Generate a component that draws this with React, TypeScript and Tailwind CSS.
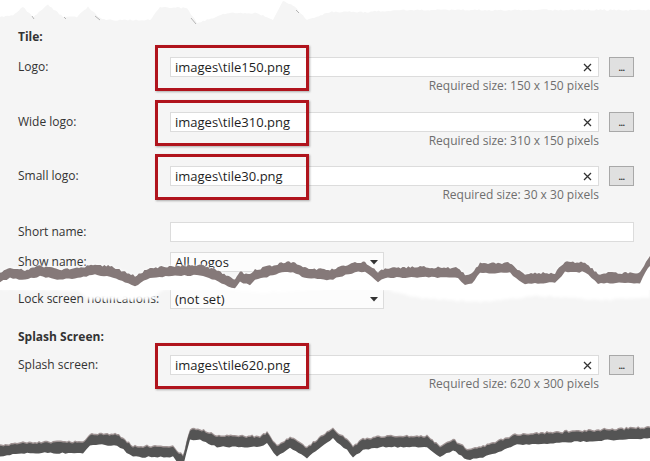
import React from 'react';

type Pt = [number, number];

// hand-read key points of the torn paper edges (page coordinates)
const TOP_EDGE: Pt[] = [
  [0, 17], [13, 15], [23, 7], [33, 17], [48, 5], [63, 17], [77, 17], [88, 7], [100, 18], [110, 20],
  [150, 20], [160, 7], [187, 8], [197, 23], [227, 13], [257, 13], [273, 20], [283, 1], [293, 5],
  [307, 20], [330, 12], [367, 12], [400, 10], [467, 10], [523, 10], [650, 10],
];

const MID_EDGE: Pt[] = [
  [0, 272], [10, 268], [25, 270], [40, 266], [60, 270], [75, 268], [95, 265], [110, 266], [125, 272],
  [135, 276], [150, 268], [175, 266], [200, 265], [215, 270], [228, 276], [235, 279], [240, 272],
  [250, 275], [255, 270], [270, 266], [285, 262], [293, 262], [305, 268], [330, 270], [355, 262],
  [365, 262], [378, 272], [385, 268], [420, 267], [458, 268], [465, 275], [472, 273], [480, 263],
  [510, 263], [525, 275], [535, 273], [555, 273], [565, 262], [585, 262], [598, 274], [610, 273],
  [640, 273], [648, 258], [650, 256],
];

const MID_WHITE: Pt[] = [
  [0, 289], [40, 290], [78, 291], [88, 299], [120, 300], [152, 299], [162, 290], [230, 289],
  [260, 293], [330, 288], [384, 289], [420, 298], [480, 302], [540, 296], [600, 300], [650, 298],
];

const BOTTOM_EDGE: Pt[] = [
  [0, 446], [7, 445], [33, 443], [83, 443], [90, 435], [117, 435], [133, 447], [173, 447],
  [177, 452], [183, 456], [190, 430], [200, 430], [217, 437], [260, 437], [267, 433], [277, 447],
  [290, 438], [307, 448], [333, 428], [337, 433], [347, 440], [353, 447], [363, 440], [383, 437],
  [427, 437], [440, 447], [453, 440], [467, 450], [483, 447], [517, 435], [650, 428],
];

function rough(points: Pt[], step: number, amp: number, seed: number): Pt[] {
  const out: Pt[] = [];
  for (let i = 0; i < points.length - 1; i++) {
    const [x0, y0] = points[i];
    const [x1, y1] = points[i + 1];
    const n = Math.max(1, Math.round((x1 - x0) / step));
    for (let k = 0; k < n; k++) {
      const t = k / n;
      const x = x0 + (x1 - x0) * t;
      const r = Math.sin((x + seed) * 12.9898) * 43758.5453;
      out.push([x, y0 + (y1 - y0) * t + (r - Math.floor(r) - 0.5) * amp]);
    }
  }
  out.push(points[points.length - 1]);
  return out;
}

const line = (pts: Pt[]) => pts.map(([x, y]) => `${x.toFixed(1)},${y.toFixed(1)}`).join(' L');

function band(points: Pt[], thick: number, seed: number) {
  const top = rough(points, 2, 2.2, seed);
  const bottom = rough(points.map(([x, y]) => [x, y + thick] as Pt), 3, 1.5, seed + 7).reverse();
  return `M${line(top)} L${line(bottom)} Z`;
}

const TopTear = () => (
  <svg className="block shrink-0" width={650} height={24} viewBox="0 0 650 24">
    <path d={`M0,0 L650,0 L${line([...rough(TOP_EDGE, 2, 1.5, 3)].reverse())} Z`} fill="#ffffff" />
    <g stroke="#8a8a8a" strokeWidth={1} opacity={0.6}>
      <line x1={32} y1={16} x2={34} y2={19} />
      <line x1={64} y1={17} x2={66} y2={19} />
      <line x1={95} y1={16} x2={100} y2={20} />
      <line x1={191} y1={18} x2={196} y2={24} />
      <line x1={296} y1={10} x2={299} y2={13} />
    </g>
  </svg>
);

const MiddleTear = () => {
  const edge = rough(MID_EDGE, 2, 2.2, 11);
  const white = `M${line(edge)} L${line(rough(MID_WHITE, 3, 2, 5).reverse())} Z`;
  return (
    <svg className="absolute left-0 top-[250px]" width={650} height={60} viewBox="0 250 650 60">
      <defs>
        <filter id="soft" x="-5%" y="-50%" width="110%" height="200%">
          <feGaussianBlur stdDeviation="1.4" />
        </filter>
        <filter id="edge">
          <feGaussianBlur stdDeviation="0.4" />
        </filter>
      </defs>
      <path d={white} fill="#ffffff" filter="url(#soft)" />
      <path d={`M${line(edge.map(([x, y]) => [x, y + 6] as Pt))} L650,290 L0,290 Z`} fill="#ffffff" />
      <path d={band(MID_EDGE, 10, 11)} fill="#857979" filter="url(#edge)" />
    </svg>
  );
};

const BottomTear = () => (
  <svg className="block shrink-0 mt-auto" width={650} height={41} viewBox="0 420 650 41">
    <path d={`M${line(rough(BOTTOM_EDGE.map(([x, y]) => [x, y + 8] as Pt), 3, 1.5, 2))} L650,461 L0,461 Z`} fill="#ffffff" />
    <path d={band(BOTTOM_EDGE.map(([x, y]) => [x, y - 1.5] as Pt), 4, 4)} fill="#a09494" />
    <path d={band(BOTTOM_EDGE, 10, 4)} fill="#545454" />
  </svg>
);

const ClearIcon = () => (
  <svg width={9} height={9} viewBox="0 0 9 9" className="shrink-0">
    <path d="M1 1 L8 8 M8 1 L1 8" stroke="#333" strokeWidth={1.3} />
  </svg>
);

const Label = ({ children, bold }: { children: React.ReactNode; bold?: boolean }) => (
  <div className={`w-[170px] shrink-0 pl-[18px] h-[20px] leading-[20px] text-[12px] text-[#333] whitespace-nowrap ${bold ? 'font-bold' : ''}`}>
    {children}
  </div>
);

interface FileRowProps {
  label: string;
  value: string;
  size: string;
  className?: string;
}

const FileRow: React.FC<FileRowProps> = ({ label, value, size, className }) => (
  <div className={`flex ${className ?? ''}`}>
    <Label>{label}</Label>
    <div className="relative w-[429px]">
      <div className="h-[20px] bg-white border border-[#dcdcdc] flex items-center pl-[4px] pr-[6px]">
        <span className="flex-1 text-[13px] text-[#1e1e1e] leading-[18px]">{value}</span>
        <ClearIcon />
      </div>
      <div className="h-[18px] leading-[18px] text-right text-[12px] text-[#6e6e6e]">Required size: {size}</div>
      <div className="absolute left-[-15px] top-[-12px] w-[154px] h-[46px] border-[3px] border-[#b0141d] shadow-[1px_1px_2px_rgba(0,0,0,0.3)]" />
    </div>
    <div className="ml-[10px] w-[25px] h-[20px] border border-[#a8a8a8] bg-[#e0e0e0] flex items-end justify-center pb-[4px]">
      <span className="text-[9px] leading-[9px] font-bold text-[#333] tracking-[-0.5px]">...</span>
    </div>
  </div>
);

const Dropdown = ({ value }: { value: string }) => (
  <div className="w-[214px] h-[20px] bg-[#fcfcfc] border border-[#dcdcdc] flex items-center pl-[4px] pr-[5px]">
    <span className="flex-1 text-[13px] text-[#1e1e1e] leading-[18px]">{value}</span>
    <svg width={8} height={5} viewBox="0 0 8 5">
      <path d="M0 0 L8 0 L4 4.5 Z" fill="#333" />
    </svg>
  </div>
);

export default function App() {
  return (
    <div className="relative w-[650px] h-[461px] overflow-hidden bg-[#f5f5f5] flex flex-col font-['Segoe_UI','Open_Sans',sans-serif]">
      <TopTear />

      <div className="mt-[5px] pl-[18px] h-[16px] leading-[16px] text-[12px] font-bold text-[#333]">Tile:</div>

      <FileRow className="mt-[12px]" label="Logo:" value="images\tile150.png" size="150 x 150 pixels" />
      <FileRow className="mt-[17px]" label="Wide logo:" value="images\tile310.png" size="310 x 150 pixels" />
      <FileRow className="mt-[16px]" label="Small logo:" value="images\tile30.png" size="30 x 30 pixels" />

      <div className="flex mt-[18px]">
        <Label>Short name:</Label>
        <div className="w-[464px] h-[20px] bg-white border border-[#dcdcdc]" />
      </div>

      <div className="flex mt-[10px]">
        <Label>Show name:</Label>
        <Dropdown value="All Logos" />
      </div>

      <div className="flex mt-[17px]">
        <Label>Lock screen notifications:</Label>
        <Dropdown value="(not set)" />
      </div>

      <div className="mt-[20px] pl-[18px] h-[16px] leading-[16px] text-[12px] font-bold text-[#333]">Splash Screen:</div>

      <FileRow className="mt-[10px]" label="Splash screen:" value="images\tile620.png" size="620 x 300 pixels" />

      <MiddleTear />
      <BottomTear />
    </div>
  );
}
